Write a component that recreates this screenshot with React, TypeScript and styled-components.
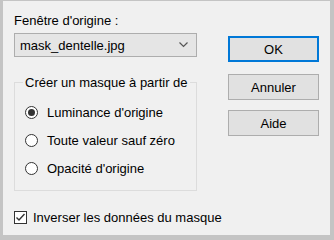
import React from 'react';
import styled, { createGlobalStyle } from 'styled-components';

const GlobalStyle = createGlobalStyle`
  html, body {
    margin: 0;
    padding: 0;
    background: #f0f0f0;
  }
  * {
    box-sizing: border-box;
  }
`;

const Dialog = styled.div`
  width: 334px;
  height: 240px;
  background: #f0f0f0;
  border-style: solid;
  border-color: #c4c4c4;
  border-width: 1px 4px 5px 3px;
  display: flex;
  font-family: 'Liberation Sans', Arial, sans-serif;
  font-size: 13px;
  color: #000;
  padding: 0 0 0 11px;
  white-space: nowrap;
`;

const LeftColumn = styled.div`
  width: 183px;
  display: flex;
  flex-direction: column;
`;

const RightColumn = styled.div`
  margin-left: 31px;
  padding-top: 35px;
  display: flex;
  flex-direction: column;
`;

const Label = styled.div`
  margin-top: 12px;
  height: 15px;
  line-height: 15px;
`;

const Combo = styled.div`
  margin-top: 5px;
  height: 24px;
  border: 1px solid #adadad;
  background: #e5e5e5;
  display: flex;
  align-items: center;
  justify-content: space-between;
  padding: 0 8px 0 5px;
`;

const GroupBox = styled.fieldset`
  margin: 18px 0 0 0;
  padding: 14px 0 0 10px;
  height: 116px;
  border: 1px solid #dcdcdc;
  min-width: 0;
`;

const Legend = styled.legend`
  padding: 0 2px;
  margin-left: -2px;
  line-height: 15px;
`;

const OptionRow = styled.label`
  display: flex;
  align-items: center;
  height: 16px;
  margin-bottom: 12px;
  gap: 9px;
`;

const RadioCircle = styled.span<{ $checked?: boolean }>`
  width: 13px;
  height: 13px;
  border-radius: 50%;
  border: 1px solid #333;
  background: #fff;
  display: flex;
  align-items: center;
  justify-content: center;
  flex-shrink: 0;

  &::after {
    content: '';
    width: 7px;
    height: 7px;
    border-radius: 50%;
    background: #333;
    display: ${(p) => (p.$checked ? 'block' : 'none')};
  }
`;

const CheckRow = styled.label`
  margin-top: 18px;
  display: flex;
  align-items: center;
  gap: 6px;
  height: 16px;
`;

const CheckBox = styled.span`
  width: 13px;
  height: 13px;
  border: 1px solid #333;
  background: #fff;
  display: flex;
  align-items: center;
  justify-content: center;
  flex-shrink: 0;
`;

const Button = styled.div<{ $default?: boolean }>`
  width: 91px;
  height: 26px;
  display: flex;
  align-items: center;
  justify-content: center;
  background: #e1e1e1;
  border: ${(p) => (p.$default ? '2px solid #0078d7' : '1px solid #adadad')};
  margin-bottom: ${(p) => (p.$default ? '12px' : '10px')};
`;

function Chevron() {
  return (
    <svg width="9" height="6" viewBox="0 0 9 6">
      <path d="M0.5 0.5 L4.5 4.5 L8.5 0.5" fill="none" stroke="#555" strokeWidth="1.2" />
    </svg>
  );
}

function Check() {
  return (
    <svg width="11" height="11" viewBox="0 0 11 11">
      <path d="M1.5 5.5 L4 8 L9.5 2" fill="none" stroke="#333" strokeWidth="1.4" />
    </svg>
  );
}

const options = [
  { label: "Luminance d'origine", checked: true },
  { label: 'Toute valeur sauf zéro', checked: false },
  { label: "Opacité d'origine", checked: false },
];

export default function App() {
  return (
    <>
      <GlobalStyle />
      <Dialog>
        <LeftColumn>
          <Label>Fenêtre d'origine :</Label>
          <Combo>
            <span>mask_dentelle.jpg</span>
            <Chevron />
          </Combo>
          <GroupBox>
            <Legend>Créer un masque à partir de</Legend>
            {options.map((o) => (
              <OptionRow key={o.label}>
                <RadioCircle $checked={o.checked} />
                {o.label}
              </OptionRow>
            ))}
          </GroupBox>
          <CheckRow>
            <CheckBox>
              <Check />
            </CheckBox>
            Inverser les données du masque
          </CheckRow>
        </LeftColumn>
        <RightColumn>
          <Button $default>OK</Button>
          <Button>Annuler</Button>
          <Button>Aide</Button>
        </RightColumn>
      </Dialog>
    </>
  );
}
